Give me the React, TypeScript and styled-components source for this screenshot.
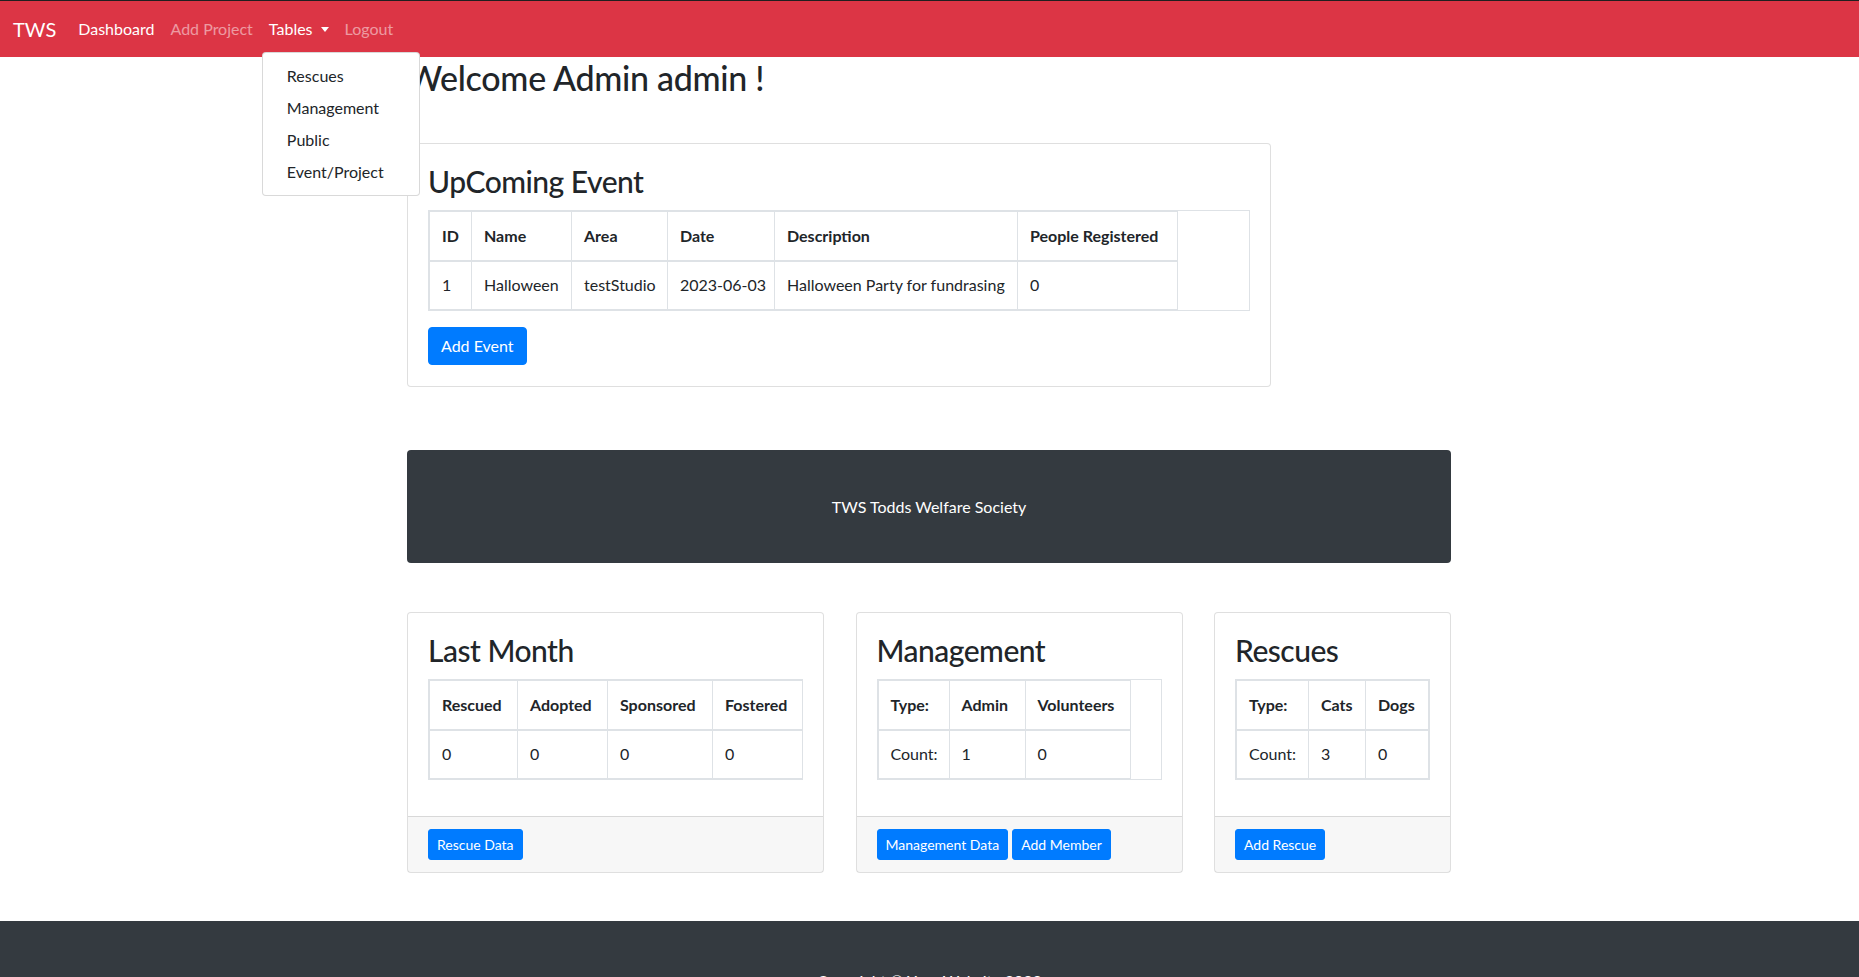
import React from "react";
import styled, { createGlobalStyle } from "styled-components";

const GlobalStyle = createGlobalStyle`
  * {
    box-sizing: border-box;
  }
  body {
    margin: 0;
    font-family: Lato, "Liberation Sans", Arial, sans-serif;
    font-size: 16px;
    line-height: 1.5;
    color: #212529;
    background-color: #fff;
  }
`;

const Navbar = styled.nav`
  display: flex;
  align-items: center;
  height: 57px;
  padding: 0 12px 0 13px;
  background-color: #dc3545;
  border-top: 1px solid #1f1f1f;
`;

const Brand = styled.a`
  font-size: 20px;
  line-height: 30px;
  color: #fff;
  margin-right: 14px;
  text-decoration: none;
`;

const NavList = styled.ul`
  display: flex;
  list-style: none;
  margin: 0;
  padding: 0;
`;

const NavItem = styled.li`
  position: relative;
`;

const NavLink = styled.a<{ $active?: boolean }>`
  display: flex;
  align-items: center;
  padding: 8px;
  line-height: 24px;
  color: ${(p) => (p.$active ? "#fff" : "rgba(255, 255, 255, 0.5)")};
  text-decoration: none;
`;

const Caret = styled.span`
  display: inline-block;
  margin-left: 8px;
  border-top: 5px solid #fff;
  border-left: 4.5px solid transparent;
  border-right: 4.5px solid transparent;
`;

const DropdownMenu = styled.div`
  position: absolute;
  top: calc(100% + 3px);
  left: 1px;
  z-index: 10;
  min-width: 158px;
  padding: 7px 0;
  background-color: #fff;
  border: 1px solid rgba(0, 0, 0, 0.15);
  border-radius: 4px;
`;

const DropdownItem = styled.a`
  display: block;
  padding: 4px 24px;
  line-height: 24px;
  color: #212529;
  white-space: nowrap;
  text-decoration: none;
`;

const Container = styled.main`
  width: 1045px;
  padding-right: 1px;
  margin: 0 auto;
`;

const Welcome = styled.h1`
  margin: 0 0 45px;
  font-size: 34px;
  line-height: 41px;
  font-weight: 500;
  letter-spacing: -0.3px;
`;

const Card = styled.div<{ $width: number }>`
  display: flex;
  flex-direction: column;
  width: ${(p) => p.$width}px;
  background-color: #fff;
  border: 1px solid rgba(0, 0, 0, 0.125);
  border-radius: 4px;
`;

const EventCard = styled(Card)`
  margin-bottom: 63px;
`;

const CardBody = styled.div<{ $bottom?: number }>`
  flex: 1;
  padding: 20px 20px ${(p) => p.$bottom ?? 20}px;
`;

const CardTitle = styled.h2`
  margin: 0 0 12px;
  font-size: 30px;
  line-height: 34px;
  font-weight: 500;
  letter-spacing: -0.5px;
`;

const CardFooter = styled.div`
  display: flex;
  gap: 4px;
  padding: 12px 20px;
  background-color: rgba(0, 0, 0, 0.03);
  border-top: 1px solid rgba(0, 0, 0, 0.125);
`;

const TableBox = styled.div`
  width: 100%;
  margin-bottom: 16px;
  border: 1px solid #dee2e6;
  overflow-x: auto;
`;

const Table = styled.table<{ $width: number }>`
  width: ${(p) => p.$width}px;
  border-collapse: collapse;
  table-layout: fixed;
`;

const Th = styled.th<{ $w: number }>`
  width: ${(p) => p.$w}px;
  padding: 12px;
  line-height: 24px;
  text-align: left;
  font-weight: 700;
  white-space: nowrap;
  border: 1px solid #dee2e6;
  border-bottom-width: 2px;
`;

const Td = styled.td`
  padding: 11px 12px 12px;
  line-height: 24px;
  white-space: nowrap;
  border: 1px solid #dee2e6;
`;

const Button = styled.button<{ $small?: boolean }>`
  padding: ${(p) => (p.$small ? "4px 8px" : "6px 12px")};
  font-family: inherit;
  font-size: ${(p) => (p.$small ? "14px" : "16px")};
  line-height: ${(p) => (p.$small ? "21px" : "24px")};
  color: #fff;
  background-color: #007bff;
  border: 1px solid #007bff;
  border-radius: ${(p) => (p.$small ? "3px" : "4px")};
  cursor: pointer;
`;

const Banner = styled.div`
  display: flex;
  align-items: center;
  justify-content: center;
  height: 113px;
  margin-bottom: 49px;
  color: #fff;
  background-color: #343a40;
  border-radius: 4px;
`;

const CardRow = styled.div`
  display: flex;
  justify-content: space-between;
  align-items: stretch;
`;

const Footer = styled.footer`
  margin-top: 48px;
  padding: 48px 0;
  text-align: center;
  color: #fff;
  background-color: #343a40;
`;

type Column = { label: string; w: number };

const DataTable = ({ columns, row }: { columns: Column[]; row: string[] }) => (
  <TableBox>
    <Table $width={columns.reduce((sum, c) => sum + c.w, 0)}>
      <thead>
        <tr>
          {columns.map((c) => (
            <Th key={c.label} $w={c.w}>
              {c.label}
            </Th>
          ))}
        </tr>
      </thead>
      <tbody>
        <tr>
          {row.map((cell, i) => (
            <Td key={i}>{cell}</Td>
          ))}
        </tr>
      </tbody>
    </Table>
  </TableBox>
);

const eventColumns: Column[] = [
  { label: "ID", w: 42 },
  { label: "Name", w: 100 },
  { label: "Area", w: 96 },
  { label: "Date", w: 107 },
  { label: "Description", w: 243 },
  { label: "People Registered", w: 160 },
];

const monthColumns: Column[] = [
  { label: "Rescued", w: 88 },
  { label: "Adopted", w: 90 },
  { label: "Sponsored", w: 105 },
  { label: "Fostered", w: 91 },
];

const managementColumns: Column[] = [
  { label: "Type:", w: 71 },
  { label: "Admin", w: 76 },
  { label: "Volunteers", w: 105 },
];

const rescueColumns: Column[] = [
  { label: "Type:", w: 72 },
  { label: "Cats", w: 57 },
  { label: "Dogs", w: 63 },
];

export default function App() {
  return (
    <>
      <GlobalStyle />
      <Navbar>
        <Brand href="#">TWS</Brand>
        <NavList>
          <NavItem>
            <NavLink $active href="#">
              Dashboard
            </NavLink>
          </NavItem>
          <NavItem>
            <NavLink href="#">Add Project</NavLink>
          </NavItem>
          <NavItem>
            <NavLink $active href="#">
              Tables
              <Caret />
            </NavLink>
            <DropdownMenu>
              <DropdownItem href="#">Rescues</DropdownItem>
              <DropdownItem href="#">Management</DropdownItem>
              <DropdownItem href="#">Public</DropdownItem>
              <DropdownItem href="#">Event/Project</DropdownItem>
            </DropdownMenu>
          </NavItem>
          <NavItem>
            <NavLink href="#">Logout</NavLink>
          </NavItem>
        </NavList>
      </Navbar>

      <Container>
        <Welcome>Welcome Admin admin !</Welcome>

        <EventCard $width={864}>
          <CardBody $bottom={21}>
            <CardTitle>UpComing Event</CardTitle>
            <DataTable
              columns={eventColumns}
              row={["1", "Halloween", "testStudio", "2023-06-03", "Halloween Party for fundrasing", "0"]}
            />
            <Button>Add Event</Button>
          </CardBody>
        </EventCard>

        <Banner>TWS Todds Welfare Society</Banner>

        <CardRow>
          <Card $width={417}>
            <CardBody>
              <CardTitle>Last Month</CardTitle>
              <DataTable columns={monthColumns} row={["0", "0", "0", "0"]} />
            </CardBody>
            <CardFooter>
              <Button $small>Rescue Data</Button>
            </CardFooter>
          </Card>
          <Card $width={327}>
            <CardBody>
              <CardTitle>Management</CardTitle>
              <DataTable columns={managementColumns} row={["Count:", "1", "0"]} />
            </CardBody>
            <CardFooter>
              <Button $small>Management Data</Button>
              <Button $small>Add Member</Button>
            </CardFooter>
          </Card>
          <Card $width={237}>
            <CardBody>
              <CardTitle>Rescues</CardTitle>
              <DataTable columns={rescueColumns} row={["Count:", "3", "0"]} />
            </CardBody>
            <CardFooter>
              <Button $small>Add Rescue</Button>
            </CardFooter>
          </Card>
        </CardRow>
      </Container>

      <Footer>Copyright © Your Website 2023</Footer>
    </>
  );
}
